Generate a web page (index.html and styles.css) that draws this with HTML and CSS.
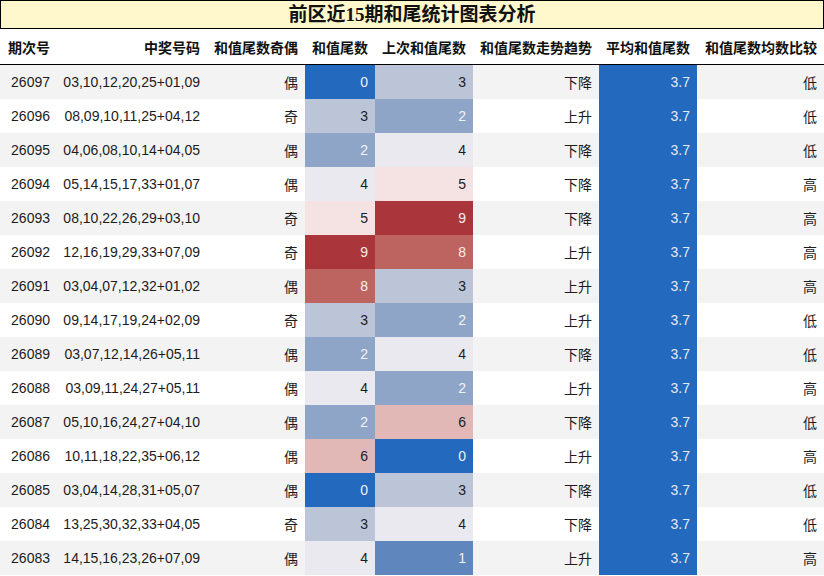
FILE: index.html
```html
<!DOCTYPE html>
<html lang="zh">
<head>
<meta charset="utf-8">
<title>前区近15期和尾统计图表分析</title>
<link rel="stylesheet" href="styles.css">
</head>
<body>
<div class="title">前区近15期和尾统计图表分析</div>
<table class="grid">
<colgroup>
<col class="c1"><col class="c2"><col class="c3"><col class="c4"><col class="c5"><col class="c6"><col class="c7"><col class="c8">
</colgroup>
<thead>
<tr><th>期次号</th><th>中奖号码</th><th>和值尾数奇偶</th><th>和值尾数</th><th>上次和值尾数</th><th>和值尾数走势趋势</th><th>平均和值尾数</th><th>和值尾数均数比较</th></tr>
</thead>
<tbody>
<tr><td>26097</td><td>03,10,12,20,25+01,09</td><td>偶</td><td class="v0">0</td><td class="v3">3</td><td>下降</td><td class="avg">3.7</td><td>低</td></tr>
<tr><td>26096</td><td>08,09,10,11,25+04,12</td><td>奇</td><td class="v3">3</td><td class="v2">2</td><td>上升</td><td class="avg">3.7</td><td>低</td></tr>
<tr><td>26095</td><td>04,06,08,10,14+04,05</td><td>偶</td><td class="v2">2</td><td class="v4">4</td><td>下降</td><td class="avg">3.7</td><td>低</td></tr>
<tr><td>26094</td><td>05,14,15,17,33+01,07</td><td>偶</td><td class="v4">4</td><td class="v5">5</td><td>下降</td><td class="avg">3.7</td><td>高</td></tr>
<tr><td>26093</td><td>08,10,22,26,29+03,10</td><td>奇</td><td class="v5">5</td><td class="v9">9</td><td>下降</td><td class="avg">3.7</td><td>高</td></tr>
<tr><td>26092</td><td>12,16,19,29,33+07,09</td><td>奇</td><td class="v9">9</td><td class="v8">8</td><td>上升</td><td class="avg">3.7</td><td>高</td></tr>
<tr><td>26091</td><td>03,04,07,12,32+01,02</td><td>偶</td><td class="v8">8</td><td class="v3">3</td><td>上升</td><td class="avg">3.7</td><td>高</td></tr>
<tr><td>26090</td><td>09,14,17,19,24+02,09</td><td>奇</td><td class="v3">3</td><td class="v2">2</td><td>上升</td><td class="avg">3.7</td><td>低</td></tr>
<tr><td>26089</td><td>03,07,12,14,26+05,11</td><td>偶</td><td class="v2">2</td><td class="v4">4</td><td>下降</td><td class="avg">3.7</td><td>低</td></tr>
<tr><td>26088</td><td>03,09,11,24,27+05,11</td><td>偶</td><td class="v4">4</td><td class="v2">2</td><td>上升</td><td class="avg">3.7</td><td>高</td></tr>
<tr><td>26087</td><td>05,10,16,24,27+04,10</td><td>偶</td><td class="v2">2</td><td class="v6">6</td><td>下降</td><td class="avg">3.7</td><td>低</td></tr>
<tr><td>26086</td><td>10,11,18,22,35+06,12</td><td>偶</td><td class="v6">6</td><td class="v0">0</td><td>上升</td><td class="avg">3.7</td><td>高</td></tr>
<tr><td>26085</td><td>03,04,14,28,31+05,07</td><td>偶</td><td class="v0">0</td><td class="v3">3</td><td>下降</td><td class="avg">3.7</td><td>低</td></tr>
<tr><td>26084</td><td>13,25,30,32,33+04,05</td><td>奇</td><td class="v3">3</td><td class="v4">4</td><td>下降</td><td class="avg">3.7</td><td>低</td></tr>
<tr><td>26083</td><td>14,15,16,23,26+07,09</td><td>偶</td><td class="v4">4</td><td class="v1">1</td><td>上升</td><td class="avg">3.7</td><td>高</td></tr>
</tbody>
</table>
</body>
</html>
```
FILE: styles.css
```css
html, body {
  margin: 0;
  padding: 0;
  background: #ffffff;
}
body {
  width: 824px;
  font-family: "Liberation Sans", "Noto Sans CJK SC", sans-serif;
  font-size: 14px;
  color: #1c1c1c;
}
.title {
  box-sizing: border-box;
  height: 29px;
  border: 1px solid #000;
  background: #fff8cc;
  text-align: center;
  font-family: "Liberation Serif", "Noto Sans CJK SC", serif;
  font-weight: bold;
  font-size: 19px;
  line-height: 27px;
  color: #111;
}
.grid {
  width: 824px;
  table-layout: fixed;
  border-collapse: collapse;
  border-spacing: 0;
}
.c1 { width: 57px; }
.c2 { width: 150px; }
.c3 { width: 98px; }
.c4 { width: 70px; }
.c5 { width: 98px; }
.c6 { width: 126px; }
.c7 { width: 98px; }
.c8 { width: 127px; }
.grid th,
.grid td {
  padding: 0 7px 0 0;
  text-align: right;
  white-space: nowrap;
  overflow: hidden;
}
.grid th {
  height: 35px;
  font-weight: bold;
  border-bottom: 1px solid #000;
  color: #111;
}
.grid td {
  height: 34px;
}
.grid tbody tr:nth-child(odd) { background: #f3f3f3; }
.grid tbody tr:nth-child(even) { background: #ffffff; }
.grid td.v0 { background: #2369bd; color: #eef1f7; }
.grid td.v1 { background: #5f86bd; color: #eef1f7; }
.grid td.v2 { background: #8fa5c8; color: #f2f3f6; }
.grid td.v3 { background: #bcc5d7; color: #1c1c1c; }
.grid td.v4 { background: #eae9ef; color: #1c1c1c; }
.grid td.v5 { background: #f5e3e3; color: #1c1c1c; }
.grid td.v6 { background: #e2b8b6; color: #1c1c1c; }
.grid td.v8 { background: #bd6461; color: #f5eeee; }
.grid td.v9 { background: #aa353b; color: #f5eeee; }
.grid td.avg { background: #2369bd; color: #e4ebf5; }
```
